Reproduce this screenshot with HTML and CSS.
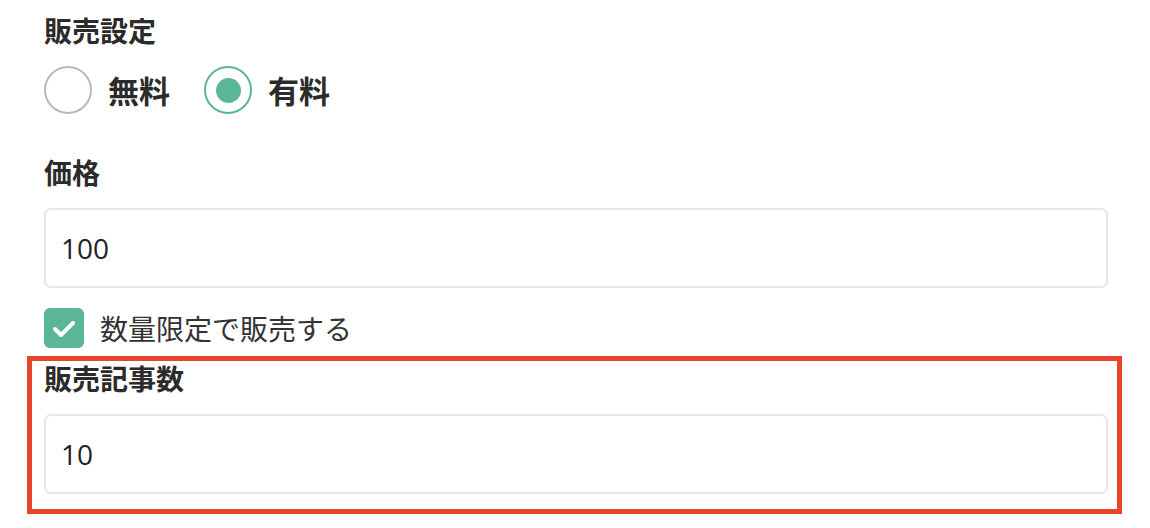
FILE: index.html
```html
<!DOCTYPE html>
<html lang="ja">
<head>
    <meta charset="UTF-8">
    <meta name="viewport" content="width=device-width, initial-scale=1.0">
    <title>販売設定</title>
    <link rel="stylesheet" href="styles.css">
</head>
<body>
    <form class="sale-form">
        <!-- 販売設定 -->
        <div class="field">
            <div class="field-label">販売設定</div>
            <div class="radio-group">
                <label class="radio">
                    <span class="radio-mark"></span>
                    <span class="radio-text">無料</span>
                </label>
                <label class="radio checked">
                    <span class="radio-mark"></span>
                    <span class="radio-text">有料</span>
                </label>
            </div>
        </div>

        <!-- 価格 -->
        <div class="field field-price">
            <div class="field-label">価格</div>
            <div class="text-input">100</div>
        </div>

        <label class="checkbox">
            <span class="checkbox-mark">
                <svg width="40" height="40" viewBox="0 0 40 40">
                    <polyline points="11,21 17,27 29,15" fill="none" stroke="#fff" stroke-width="4" stroke-linecap="round" stroke-linejoin="round"/>
                </svg>
            </span>
            <span class="checkbox-text">数量限定で販売する</span>
        </label>

        <!-- 販売記事数 (highlighted) -->
        <div class="highlight">
            <div class="field-label compact">販売記事数</div>
            <div class="text-input">10</div>
        </div>
    </form>
</body>
</html>
```

FILE: styles.css
```css
body {
    margin: 0;
    padding: 0;
    background: #fff;
    color: #333;
    font-family: "Noto Sans CJK JP", "Noto Sans", sans-serif;
}
.sale-form {
    width: 1064px;
    padding: 10px 0 0 44px;
}
.field-label {
    font-size: 28px;
    font-weight: bold;
    line-height: 40px;
    color: #2b2b2b;
}
.field-label.compact {
    line-height: 34px;
}
.radio-group {
    display: flex;
    align-items: center;
    gap: 34px;
    margin-top: 16px;
}
.radio {
    display: flex;
    align-items: center;
    gap: 16px;
}
.radio-mark {
    box-sizing: border-box;
    width: 48px;
    height: 48px;
    border: 2px solid #b8b8bf;
    border-radius: 50%;
    display: flex;
    align-items: center;
    justify-content: center;
}
.radio.checked .radio-mark {
    border-color: #5bb597;
}
.radio.checked .radio-mark::after {
    content: "";
    width: 25px;
    height: 25px;
    border-radius: 50%;
    background: #5bb597;
}
.radio-text {
    font-size: 31px;
    font-weight: bold;
    line-height: 48px;
    color: #2b2b2b;
}
.field-price {
    margin-top: 38px;
}
.text-input {
    box-sizing: border-box;
    height: 80px;
    margin-top: 16px;
    padding: 0 15px;
    border: 2px solid #e6e6e6;
    border-radius: 7px;
    display: flex;
    align-items: center;
    font-family: "Open Sans", "Noto Sans CJK JP", sans-serif;
    font-size: 28px;
    color: #222;
}
.checkbox {
    display: flex;
    align-items: center;
    gap: 16px;
    margin-top: 20px;
}
.checkbox-mark {
    width: 40px;
    height: 40px;
    border-radius: 6px;
    background: #5bb597;
    display: flex;
}
.checkbox-text {
    font-size: 28px;
    line-height: 40px;
    color: #333;
}
.highlight {
    margin: 8px -14px 0 -17px;
    padding: 0 9px 15px 12px;
    border: 5px solid #e8432b;
}
.highlight .text-input {
    margin-top: 19px;
}
```
